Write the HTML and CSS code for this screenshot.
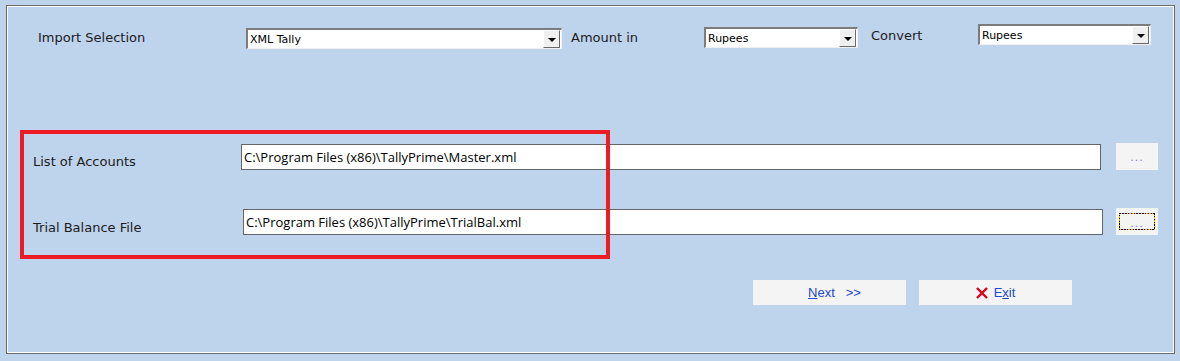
FILE: index.html
```html
<!DOCTYPE html>
<html lang="en">
<head>
    <meta charset="UTF-8">
    <title>Import Selection</title>
    <link rel="stylesheet" href="styles.css">
</head>
<body>
    <div class="frame">
        <div class="top-row">
            <span class="label label-import">Import Selection</span>
            <div class="combo combo-import">
                <span class="combo-text">XML Tally</span>
                <span class="combo-btn"><span class="arrow"></span></span>
            </div>
            <span class="label label-amount">Amount in</span>
            <div class="combo combo-amount">
                <span class="combo-text">Rupees</span>
                <span class="combo-btn"><span class="arrow"></span></span>
            </div>
            <span class="label label-convert">Convert</span>
            <div class="combo combo-convert">
                <span class="combo-text">Rupees</span>
                <span class="combo-btn"><span class="arrow"></span></span>
            </div>
        </div>

        <div class="files">
            <div class="highlight-box"></div>
            <div class="file-row row-accounts">
                <span class="label file-label">List of Accounts</span>
                <div class="path-box">C:\Program Files (x86)\TallyPrime\Master.xml</div>
                <button class="browse">...</button>
            </div>
            <div class="file-row row-trial">
                <span class="label file-label">Trial Balance File</span>
                <div class="path-box">C:\Program Files (x86)\TallyPrime\TrialBal.xml</div>
                <button class="browse focused"><span class="focus-ring">...</span></button>
            </div>
        </div>

        <div class="actions">
            <button class="action action-next"><span><span class="ul">N</span>ext &nbsp;&nbsp;&gt;&gt;</span></button>
            <button class="action">
                <svg class="x-icon" width="12" height="12" viewBox="0 0 12 12">
                    <path d="M1 1 L11 11 M11 1 L1 11" stroke="#e0001a" stroke-width="2.4" fill="none"/>
                </svg>
                <span>E<span class="ul">x</span>it</span>
            </button>
        </div>
    </div>
</body>
</html>
```

FILE: styles.css
```css
body {
    margin: 0;
    padding: 0;
    background-color: #bed3ec;
    font-family: 'DejaVu Sans', Verdana, sans-serif;
    color: #1a1a1a;
}
.frame {
    position: relative;
    margin: 5px 5px 0 6px;
    height: 347px;
    border: 1px solid #6a6a6a;
    box-shadow: inset 0 0 0 1px #ffffff;
    box-sizing: content-box;
}
.label {
    font-size: 13px;
    color: #1c1c1c;
}

/* top row with the three drop downs */
.top-row {
    display: flex;
    align-items: flex-start;
    padding: 0 0 0 31px;
}
.label-import {
    width: 208px;
    margin-top: 24px;
}
.label-amount {
    width: 133px;
    margin: 24px 0 0 9px;
}
.label-convert {
    width: 107px;
    margin: 22px 0 0 13px;
}
.combo {
    display: flex;
    align-items: center;
    height: 21px;
    box-sizing: border-box;
    background: #ffffff;
    border-top: 2px solid #7c7c7c;
    border-left: 2px solid #7c7c7c;
    border-right: 1px solid #f0f0f0;
    border-bottom: 1px solid #f0f0f0;
}
.combo-import { width: 316px; margin-top: 22px; }
.combo-amount { width: 154px; margin-top: 21px; }
.combo-convert { width: 173px; margin-top: 18px; }
.combo-text {
    flex: 1;
    font-size: 11px;
    padding-left: 2px;
    color: #000;
}
.combo-btn {
    width: 15px;
    height: 16px;
    margin-right: 1px;
    background: #f0f0f0;
    border-top: 1px solid #ffffff;
    border-left: 1px solid #ffffff;
    border-right: 1px solid #6a6a6a;
    border-bottom: 1px solid #6a6a6a;
    display: flex;
    align-items: center;
    justify-content: center;
}
.arrow {
    width: 0;
    height: 0;
    margin-top: 2px;
    border-left: 4px solid transparent;
    border-right: 4px solid transparent;
    border-top: 4px solid #000;
}

/* file path rows */
.files {
    margin-top: 94px;
}
.highlight-box {
    position: absolute;
    left: 13px;
    top: 124px;
    width: 582px;
    height: 121px;
    border: 4px solid #ed1c24;
}
.file-row {
    display: flex;
    align-items: center;
}
.row-accounts {
    padding-left: 26px;
}
.row-trial {
    padding-left: 26px;
    margin-top: 38px;
}
.file-label {
    width: 208px;
    margin-top: 10px;
}
.row-trial .file-label {
    width: 210px;
    margin-top: 11px;
}
.path-box {
    width: 860px;
    height: 26px;
    box-sizing: border-box;
    border: 1px solid #666666;
    background: #ffffff;
    font-family: 'Open Sans', sans-serif;
    font-size: 13px;
    line-height: 24px;
    padding-left: 2px;
    color: #000;
}
.browse {
    width: 42px;
    height: 27px;
    margin-left: 15px;
    padding: 0;
    border: none;
    background: #f4f4f4;
    color: #7b7fd0;
    font-family: 'DejaVu Sans', sans-serif;
    font-size: 11px;
    letter-spacing: 1px;
    line-height: 30px;
}
.row-trial .browse {
    margin-left: 13px;
}
.focus-ring {
    display: block;
    margin: 3px;
    height: 15px;
    border: 1px solid transparent;
    border-image: repeating-linear-gradient(45deg, #000 0 1px, #f2b400 1px 2px) 1;
    line-height: 20px;
}

/* bottom buttons */
.actions {
    display: flex;
    gap: 13px;
    padding-left: 746px;
    margin-top: 45px;
}
.action {
    width: 153px;
    height: 25px;
    border: none;
    background: #f4f4f4;
    color: #2447d0;
    font-family: 'Liberation Sans', Arial, sans-serif;
    font-size: 13px;
    display: flex;
    align-items: center;
    justify-content: center;
    gap: 6px;
    padding: 0;
}
.action-next span {
    margin-left: 10px;
}
.action-next .ul {
    margin-left: 0;
}
.ul {
    text-decoration: underline;
}
.x-icon {
    display: block;
}
```
